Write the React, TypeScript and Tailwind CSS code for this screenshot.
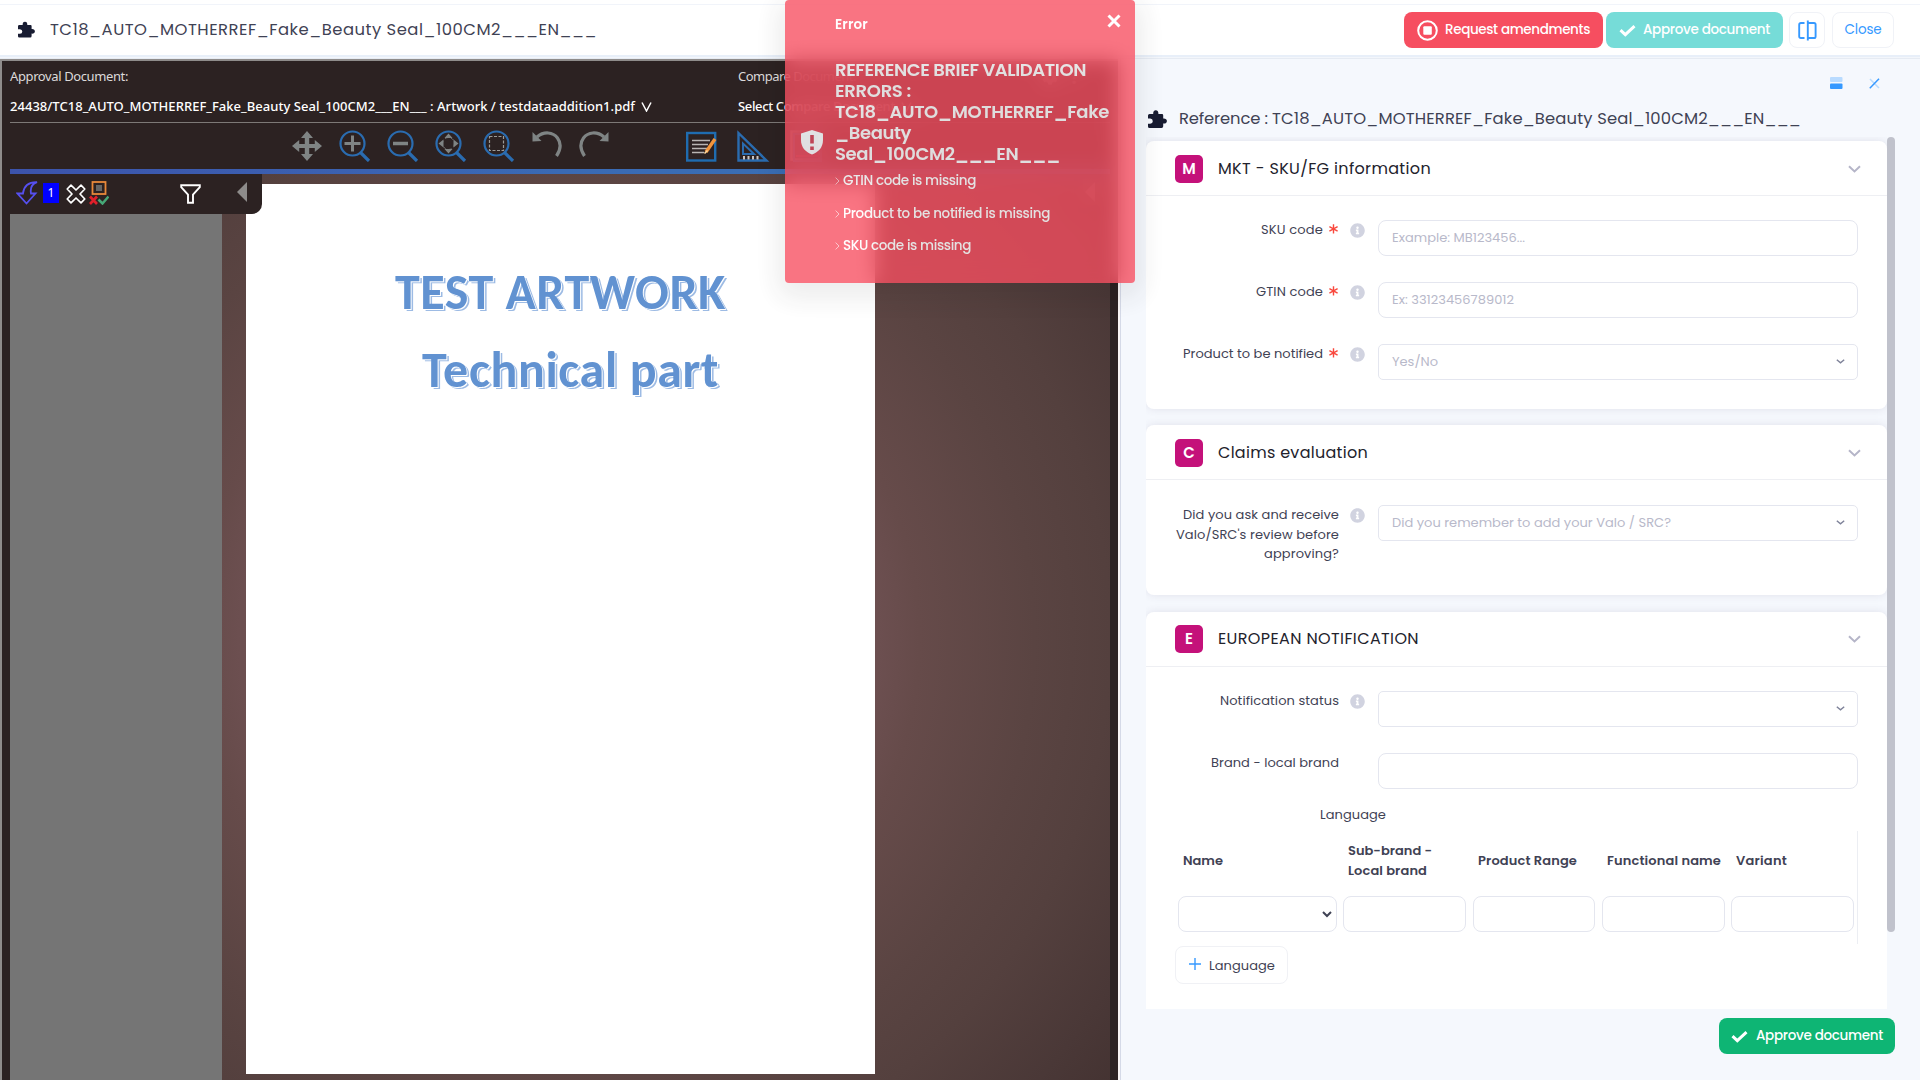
import { useLayoutEffect, useRef, useState } from "react";
import type { ReactNode } from "react";
import { FaInfoCircle, FaCog } from "react-icons/fa";

const REF = "TC18_AUTO_MOTHERREF_Fake_Beauty Seal_100CM2___EN___";

/* Spreads or tightens a single line of text so that it fills the given width. */
function Fit({ w, children, className = "" }: { w: number; children: string; className?: string }) {
  const ref = useRef<HTMLSpanElement>(null);
  const [ls, setLs] = useState(0);
  useLayoutEffect(() => {
    if (ref.current) {
      const natural = ref.current.getBoundingClientRect().width;
      setLs((w - natural) / children.length);
    }
  }, [w, children]);
  return (
    <span ref={ref} className={`inline-block whitespace-pre ${className}`} style={{ letterSpacing: `${ls}px` }}>
      {children}
    </span>
  );
}

function Puzzle({ className = "" }: { className?: string }) {
  return (
    <svg viewBox="0 0 19 18" fill="#181c32" className={className}>
      <path d="M1.500 4H5.200C5 1.500 6 .2 7.800.2S10.600 1.500 10.400 4H14Q15.200 4 15.200 5.200V8.400C17.500 8.200 18.900 9.300 18.900 11S17.500 13.800 15.200 13.600V16.300Q15.200 18 13.600 18H1.500Q0 18 0 16.500V13.800H2.200Q4.800 13.600 4.800 11.200T2.200 8.600H0V5.500Q0 4 1.500 4z" />
    </svg>
  );
}

function Check({ className = "" }: { className?: string }) {
  return (
    <svg width="17" height="12" viewBox="0 0 17 12" fill="none" className={className}>
      <path d="M1.5 5.2 6.3 9.6 15.5 1.2" stroke="#fff" strokeWidth="3" />
    </svg>
  );
}

function Chevron({ className = "" }: { className?: string }) {
  return (
    <svg width="13" height="8" viewBox="0 0 13 8" fill="none" className={className}>
      <path d="M1 1.2 6.5 6.4 12 1.2" stroke="#b5b5c8" strokeWidth="2" />
    </svg>
  );
}

function SmallChevron() {
  return (
    <svg width="9" height="5" viewBox="0 0 9 5" fill="none">
      <path d="M.8.7 4.5 3.8 8.2.7" stroke="#7e8299" strokeWidth="1.4" />
    </svg>
  );
}

function Magnifier({ children }: { children: ReactNode }) {
  return (
    <svg width="32" height="32" viewBox="0 0 32 32" fill="none">
      <circle cx="13.5" cy="13.5" r="12" stroke="#2a6cb0" strokeWidth="2.2" />
      <path d="M21.5 22.5 30 31" stroke="#2a6cb0" strokeWidth="3.2" />
      {children}
    </svg>
  );
}

function Toolbar() {
  return (
    <div className="flex h-[46px] flex-none items-start pt-[7px] pl-[282px]">
      <svg width="30" height="32" viewBox="0 0 30 32" fill="#7f8484" className="mr-[17px]">
        <path d="M15 1l6 7h-3.8v6h5.6v-4L30 16l-7.200 6v-4h-5.600v6H21l-6 7-6-7h3.800v-6H7.200v4L0 16l7.200-6v4h5.600V8H9z" />
      </svg>
      <Magnifier>
        <path d="M13.500 5.500v16M5.500 13.500h16" stroke="#7f8484" strokeWidth="3" />
      </Magnifier>
      <span className="w-4" />
      <Magnifier>
        <path d="M6 13.500h15" stroke="#7f8484" strokeWidth="3.500" />
      </Magnifier>
      <span className="w-4" />
      <Magnifier>
        <path d="M13.500 3.500l4 4.500h-8zM13.500 23.500l4-4.500h-8zM3.500 13.500l5-4v8zM23.500 13.500l-5-4v8z" fill="#7f8484" />
        <circle cx="13.500" cy="13.500" r="6" stroke="#7f8484" strokeWidth=".8" strokeDasharray="3 3" />
      </Magnifier>
      <span className="w-4" />
      <Magnifier>
        <rect x="6.500" y="6.500" width="14" height="14" stroke="#9a9a98" strokeWidth="1.200" strokeDasharray="3 1.500" />
      </Magnifier>
      <svg width="31" height="28" viewBox="0 0 31 28" fill="none" className="ml-[17px]">
        <path d="M5 7C12 1 21 2 25.500 8c4 5.500 3 12-1 18" stroke="#7f8484" strokeWidth="3.200" />
        <path d="M.5 2v9.500L9.500 11z" fill="#7f8484" />
      </svg>
      <svg width="31" height="28" viewBox="0 0 31 28" fill="none" className="ml-[15px]">
        <path d="M26 7C19 1 10 2 5.500 8c-4 5.500-3 12 1 18" stroke="#7f8484" strokeWidth="3.200" />
        <path d="M30.500 2v9.500L21.500 11z" fill="#7f8484" />
      </svg>
      <svg width="31" height="32" viewBox="0 0 31 32" fill="none" className="ml-[77px]">
        <rect x="1.200" y="3" width="28" height="27.500" stroke="#1f6cb0" strokeWidth="2.400" />
        <path d="M6 10.500h18M6 14.500h16M6 18.500h15M6 22.500h12" stroke="#b9b5b3" strokeWidth="1.300" />
        <path d="M29 9 20 22" stroke="#f2953c" strokeWidth="3.400" />
        <path d="M21.500 20.500 18.500 23.500" stroke="#ffd9a0" strokeWidth="1.600" />
      </svg>
      <svg width="33" height="32" viewBox="0 0 33 32" fill="none" className="ml-[20px]">
        <path d="M1.500 3v27.500H29.500z" stroke="#2a6cb0" strokeWidth="2.400" />
        <path d="M6 13.500v10.500h11z" stroke="#2a6cb0" strokeWidth="2" />
        <path d="M7 26v3.500M11.500 26v3.500M16 26v3.500M20.500 26v3.500" stroke="#c9c5c3" strokeWidth="2" />
      </svg>
      <svg width="33" height="33" viewBox="0 0 33 33" fill="none" className="ml-[20px]">
        <rect x="1.500" y="1.500" width="28" height="28" stroke="#8a8a8a" strokeWidth="2.400" />
        <rect x="4" y="4" width="27" height="27" stroke="#2a6cb0" strokeWidth="2" />
        <path d="M6 26h24" stroke="#c02030" strokeWidth="2" />
      </svg>
    </div>
  );
}

function Caret() {
  return (
    <svg width="11" height="10" viewBox="0 0 11 10" fill="none">
      <path d="M1 .5 5.500 9 10 .5" stroke="#fff" strokeWidth="1.500" />
    </svg>
  );
}

function Viewer() {
  return (
    <div className="flex h-[1021px] w-[1118px] flex-none flex-col border-t-2 border-l-2 border-[#8f8c8b] bg-[#2c2222] pr-2 pl-2 font-['Noto_Sans','Open_Sans',sans-serif] text-[13px] text-white">
      <div className="flex h-[62px] flex-none border-b border-[#7d7977]">
        <div className="flex w-[728px] flex-col">
          <div className="flex h-8 items-center text-[#dcdada]">
            <Fit w={118}>Approval Document:</Fit>
          </div>
          <div className="flex h-7 items-center gap-[6px] text-[13px] font-medium">
            <Fit w={625}>{`24438/${REF} : Artwork / testdataaddition1.pdf`}</Fit>
            <Caret />
          </div>
        </div>
        <div className="flex flex-1 flex-col">
          <div className="flex h-8 items-center text-[#dcdada]">
            <Fit w={118}>Compare Document:</Fit>
            <FaCog className="ml-[186px] text-[16px] text-[#9a9a9a]" />
            <span className="ml-3 text-[20px] font-bold text-[#9a9a9a]">?</span>
          </div>
          <div className="flex h-7 items-center gap-[6px] font-medium">
            <Fit w={157}>Select Compare Document</Fit>
            <Caret />
          </div>
        </div>
      </div>
      <Toolbar />
      <div className="h-[5px] flex-none bg-linear-to-r from-[#3c53ab] via-[#3a6ab4] to-[#3a73b4]" />
      <div className="relative flex flex-1 overflow-hidden bg-[radial-gradient(circle_at_549px_466px,#7a5a5a_0px,#6c4f50_320px,#664b4a_360px,#5a4442_475px,#54403e_551px,#4a3837_650px,#433231_720px)]">
        <div className="w-[212px] bg-[#757575]" />
        <div className="mt-[10px] ml-6 flex h-[890px] w-[629px] flex-col bg-white pl-[149px] font-[Carlito,Calibri,Lato,'Liberation_Sans',sans-serif] text-[50px] leading-[56px] font-bold text-[#6192d1] [text-shadow:1px_1px_0_#fff,2.500px_2px_0_#9dbbe4]">
          <span className="mt-[80px]">
            <Fit w={331}>TEST ARTWORK</Fit>
          </span>
          <span className="mt-[22px] pl-[27px]">
            <Fit w={297}>Technical part</Fit>
          </span>
        </div>
        <div className="absolute top-0 left-0 flex h-10 w-[252px] items-center rounded-br-[10px] bg-[#2c2222] pb-[2px] pl-[6px]">
          <svg width="22" height="25" viewBox="0 0 22 25" fill="none">
            <path d="M21 1.200C13 1 8 4 7 12.500H1.500L10.500 22.500 19.500 12.500H15C14 7 16 3 21 1.200z" stroke="#5650f0" strokeWidth="1.800" />
          </svg>
          <span className="ml-[5px] flex h-5 w-4 items-center justify-center bg-[#0000ff] text-[12px]">1</span>
          <svg width="20" height="20" viewBox="0 0 20 20" fill="none" className="mt-px ml-[7px]">
            <path d="M5 1.200 10 6l5-4.800L18.800 5 14 10l4.800 5-3.800 3.800L10 14l-5 4.800L1.200 15 6 10 1.200 5z" stroke="#fff" strokeWidth="1.700" strokeLinejoin="round" />
          </svg>
          <svg width="20" height="24" viewBox="0 0 20 24" fill="none" className="ml-[3px]">
            <rect x="3.500" y="1" width="13" height="12" stroke="#e8883a" strokeWidth="1.800" />
            <rect x="7" y="4" width="6" height="6" fill="#666" />
            <path d="M1 15.500l7 7.500M8 15.500l-7 7.500" stroke="#e0202a" strokeWidth="2.600" />
            <path d="M9.500 18.500l4 4 6-7" stroke="#46a877" strokeWidth="2.500" />
          </svg>
          <svg width="21" height="20" viewBox="0 0 21 20" fill="none" className="mt-[2px] ml-[71px]">
            <path d="M1.200 1.200h18.600v2L13 10.500v8.300H8v-8.300L1.200 3.200z" stroke="#fff" strokeWidth="1.900" />
          </svg>
          <svg width="10" height="20" viewBox="0 0 10 20" fill="#8d8b8a" className="mb-[2px] ml-[36px]">
            <path d="M10 0v20L0 10z" />
          </svg>
        </div>
        <div className="absolute top-0 right-0 flex h-10 w-9 items-center rounded-bl-[10px] bg-[#2c2222]/30 pl-[11px]">
          <svg width="10" height="20" viewBox="0 0 10 20" fill="#a09a98" className="mb-1">
            <path d="M10 0v20L0 10z" />
          </svg>
        </div>
      </div>
    </div>
  );
}

function Card({ letter, title, w, className, children }: { letter: string; title: string; w: number; className: string; children: ReactNode }) {
  return (
    <section className={`flex flex-none flex-col bg-white shadow-[0_0_8px_rgba(82,63,105,0.12)] ${className}`}>
      <header className="flex h-[55px] flex-none items-center border-b border-[#eeeff3] pt-[2px] pr-[26px] pl-[29px]">
        <span className="flex size-7 items-center justify-center rounded-[5px] bg-[#c4117a] text-[15px] font-semibold text-white">{letter}</span>
        <span className="ml-[15px] flex-1 text-[16px] text-[#22222c]">
          <Fit w={w}>{title}</Fit>
        </span>
        <Chevron />
      </header>
      {children}
    </section>
  );
}

function Row({ label, w, required, info, placeholder = "", pw = 0, select, children, className = "" }: {
  label?: string; w?: number; required?: boolean; info?: boolean; placeholder?: string; pw?: number; select?: boolean; children?: ReactNode; className?: string;
}) {
  return (
    <div className={`flex ${className}`}>
      <div className="flex w-[193px] flex-none items-start justify-end text-right leading-[19.500px]">
        {children ?? <Fit w={w ?? 0}>{label ?? ""}</Fit>}
        {required && (
          <svg width="9" height="10" viewBox="0 0 9 10" className="mt-[4px] mr-px ml-[6px]" stroke="#f9483d" strokeWidth="1.400">
            <path d="M4.500.3v9.200M.4 2.700l8.200 4.500M8.600 2.700.4 7.200" />
          </svg>
        )}
      </div>
      <div className="flex w-[39px] flex-none pt-[3px] pl-[11px]">{info && <FaInfoCircle className="text-[15px] text-[#d1d3e0]" />}</div>
      <div className={`flex h-9 w-[480px] items-center justify-between border border-[#e4e6ef] pr-[12px] pb-px pl-[13px] text-[#b8b9ca] ${select ? "rounded-[5px]" : "rounded-[8px]"}`}>
        {placeholder ? <Fit w={pw}>{placeholder}</Fit> : <span />}
        {select && <SmallChevron />}
      </div>
    </div>
  );
}

function Th({ w, children }: { w: number; children: string }) {
  return (
    <div>
      <Fit w={w}>{children}</Fit>
    </div>
  );
}

function Panel() {
  return (
    <div className="flex flex-1 flex-col pl-7">
      <div className="flex h-[44px] flex-none items-center justify-end gap-[26px] pt-[4px] pr-[40px]">
        <svg width="13" height="12" viewBox="0 0 13 12">
          <rect width="12.500" height="5" rx="1" fill="#b9dbff" />
          <rect y="6.500" width="12.500" height="5.500" rx="1" fill="#3699ff" />
        </svg>
        <svg width="11" height="11" viewBox="0 0 11 11" fill="none" strokeWidth="1.500">
          <path d="M1 1l9 9" stroke="#b9dbff" />
          <path d="M10 .8.8 10.200" stroke="#3699ff" />
        </svg>
      </div>
      <div className="flex h-[34px] flex-none items-center pb-[2px] pl-[2px] text-[16.400px] text-[#3f4254]">
        <Puzzle className="mr-[12px] h-[18px] w-[19px]" />
        <span className="pt-px">
          <Fit w={93}>{"Reference : "}</Fit>
          <Fit w={529}>{REF}</Fit>
        </span>
      </div>
      <div className="flex h-[872px] flex-none overflow-hidden">
        <div className="flex h-[872px] w-[741px] flex-col gap-4 overflow-hidden pt-[4px]">
          <Card letter="M" title="MKT - SKU/FG information" w={213} className="h-[268px] rounded-[8px]">
            <Row className="mt-[24px]" label="SKU code" w={62} required info placeholder="Example: MB123456..." pw={133} />
            <Row className="mt-[26px]" label="GTIN code" w={67} required info placeholder="Ex: 33123456789012" pw={122} />
            <Row className="mt-[26px]" label="Product to be notified" w={140} required info placeholder="Yes/No" pw={46} select />
          </Card>
          <Card letter="C" title="Claims evaluation" w={150} className="h-[170px] rounded-[8px]">
            <Row className="mt-[25px]" info placeholder="Did you remember to add your Valo / SRC?" pw={279} select>
              <span className="flex flex-col items-end">
                <Fit w={156}>Did you ask and receive</Fit>
                <Fit w={163}>Valo/SRC's review before</Fit>
                <Fit w={75}>approving?</Fit>
              </span>
            </Row>
          </Card>
          <Card letter="E" title="EUROPEAN NOTIFICATION" w={201} className="mt-px h-[420px] rounded-t-[8px] *:first:pt-0">
            <Row className="mt-[24px]" label="Notification status" w={119} info select />
            <Row className="mt-[26px]" label="Brand - local brand" w={128} />
            <div className="mt-[15px] h-[27px] pl-[174px] leading-[22px]">
              <Fit w={66}>Language</Fit>
            </div>
            <div className="ml-[29px] h-[113px] w-[683px] flex-none border-r border-[#eceef3]">
              <div className="grid h-[58px] grid-cols-[165px_130px_129px_129px_129px] items-center pt-[2px] pl-2 leading-[20px] font-semibold">
                <Th w={40}>Name</Th>
                <div className="flex flex-col items-start">
                  <Th w={84}>Sub-brand -</Th>
                  <Th w={79}>Local brand</Th>
                </div>
                <Th w={99}>Product Range</Th>
                <Th w={114}>Functional name</Th>
                <Th w={51}>Variant</Th>
              </div>
              <div className="mt-[7px] flex pl-[3px]">
                <div className="flex h-9 w-[159px] items-center justify-end rounded-[8px] border border-[#e4e6ef] pr-[4px]">
                  <svg width="10" height="7" viewBox="0 0 10 7" fill="none">
                    <path d="M1 1l4 4 4-4" stroke="#3f4254" strokeWidth="2" />
                  </svg>
                </div>
                <div className="ml-[6px] h-9 w-[123px] rounded-[8px] border border-[#e4e6ef]" />
                <div className="ml-[7px] h-9 w-[122px] rounded-[8px] border border-[#e4e6ef]" />
                <div className="ml-[7px] h-9 w-[123px] rounded-[8px] border border-[#e4e6ef]" />
                <div className="ml-[6px] h-9 w-[123px] rounded-[8px] border border-[#e4e6ef]" />
              </div>
            </div>
            <button className="mt-[2px] ml-[29px] flex h-[38px] w-[113px] flex-none items-center rounded-[8px] border border-[#f0f1f5] pt-px pl-[13px]">
              <svg width="12" height="12" viewBox="0 0 12 12" className="mr-[8px] mb-[3px]">
                <path d="M6 0v12M0 6h12" stroke="#3699ff" strokeWidth="1.400" />
              </svg>
              <Fit w={66}>Language</Fit>
            </button>
          </Card>
        </div>
        <div className="h-[795px] w-2 rounded bg-[#c0c2cc]" />
      </div>
      <button className="mt-[9px] ml-[573px] flex h-9 w-[176px] flex-none items-center rounded-[8px] bg-[#0eb574] pt-px pl-[12px] text-[13.500px] font-medium text-white">
        <Check className="mr-[8px]" />
        <Fit w={127}>Approve document</Fit>
      </button>
    </div>
  );
}

function Header() {
  return (
    <header className="flex h-[59px] flex-none items-center border-b border-[#e6ebf3] bg-[linear-gradient(#fff_0_4px,#f1f4fa_4px_5px,#fff_5px_55px,#e8eff9_55px_57px,#f3f6fb_57px)] pt-[2px] pr-[26px] pl-[18px]">
      <Puzzle className="mr-[15px] mb-px h-[17px] w-[17px]" />
      <span className="flex-1 text-[16.400px] text-[#3f4254]">
        <Fit w={547}>{REF}</Fit>
      </span>
      <div className="flex h-9 w-[199px] items-center rounded-[8px] bg-[#f64e60] pt-px pl-[13px] text-[13.500px] font-medium text-white">
        <svg width="21" height="21" viewBox="0 0 21 21" fill="none" className="mr-[7px]">
          <circle cx="10.500" cy="10.500" r="9.300" stroke="#fff" strokeWidth="2" />
          <rect x="6.300" y="6.300" width="8.500" height="8.500" rx="1" fill="#fff" />
        </svg>
        <Fit w={145}>Request amendments</Fit>
      </div>
      <div className="ml-[3px] flex h-9 w-[177px] items-center rounded-[8px] bg-[#76dcd8] pt-px pl-[13px] text-[13.500px] font-medium text-white">
        <Check className="mr-[7px]" />
        <Fit w={127}>Approve document</Fit>
      </div>
      <div className="ml-[6px] flex h-9 w-[36px] items-center justify-center rounded-[8px] border border-[#f0f2f7]">
        <svg width="19" height="21" viewBox="0 0 19 21" fill="none" stroke="#3699ff" strokeWidth="1.900">
          <path d="M6.500 3H3Q1.200 3 1.200 4.800V16.200Q1.200 18 3 18h3.500M9.800.5v20M9.800 3H16q1.600 0 1.600 1.600v11.800Q17.600 18 16 18H9.800" />
        </svg>
      </div>
      <div className="ml-[7px] flex h-9 w-[62px] items-center justify-center rounded-[8px] border border-[#f0f2f7] pt-px text-[13.500px] text-[#3699ff]">
        <Fit w={37}>Close</Fit>
      </div>
    </header>
  );
}

function ToastItem({ w, children }: { w: number; children: string }) {
  return (
    <li className="flex h-[32.500px] items-start leading-[20px]">
      <svg width="5" height="8" viewBox="0 0 5 8" fill="none" className="mt-[6px] mr-[3px]">
        <path d="M.6.6 4 4 .6 7.400" stroke="#fff" strokeOpacity=".6" />
      </svg>
      <Fit w={w}>{children}</Fit>
    </li>
  );
}

function Toast() {
  return (
    <div className="absolute top-0 left-[785px] flex h-[283px] w-[350px] rounded-[4px] bg-[#f64e60]/93 pt-[15px] text-white opacity-85 shadow-[0_8px_28px_8px_rgba(0,0,0,0.09)] backdrop-blur-[10px]">
      <svg width="22" height="25" viewBox="0 0 22 25" className="mt-[115px] ml-4 flex-none">
        <path d="M11 0 22 3.500V10c0 7.500-4.500 12-11 14.500C4.500 22 0 17.500 0 10V3.500z" fill="#fff" />
        <path d="M11 5v8.500M11 16.500v3.500" stroke="#d84a5b" strokeWidth="3.600" />
      </svg>
      <div className="ml-[12px] flex-none">
        <div className="h-5 text-[13.500px] leading-5 font-semibold">
          <Fit w={33}>Error</Fit>
        </div>
        <div className="mt-[24px] flex flex-col items-start text-[18px] leading-[21px] font-semibold">
          <Fit w={251}>REFERENCE BRIEF VALIDATION</Fit>
          <Fit w={76}>ERRORS :</Fit>
          <Fit w={274}>TC18_AUTO_MOTHERREF_Fake</Fit>
          <Fit w={76}>_Beauty</Fit>
          <Fit w={225}>Seal_100CM2___EN___</Fit>
        </div>
        <ul className="mt-[7px] text-[13.500px] font-medium">
          <ToastItem w={133}>GTIN code is missing</ToastItem>
          <ToastItem w={207}>Product to be notified is missing</ToastItem>
          <ToastItem w={128}>SKU code is missing</ToastItem>
        </ul>
      </div>
      <svg width="14" height="14" viewBox="0 0 14 14" className="absolute top-[14px] right-[14px]">
        <path d="M1.500 1.500l11 11M12.500 1.500l-11 11" stroke="#fff" strokeWidth="3" />
      </svg>
    </div>
  );
}

export default function App() {
  return (
    <div className="relative flex h-[1080px] w-[1920px] flex-col overflow-hidden bg-[#f5f8fd] font-[Poppins,Inter,sans-serif] text-[13px] text-[#3f4254]">
      <Header />
      <div className="flex flex-1">
        <Viewer />
        <div className="w-[3px] flex-none border-r border-[#d5dae8] bg-[#f8f4f4]" />
        <div className="-ml-[3px] flex flex-1">
          <Panel />
        </div>
      </div>
      <Toast />
    </div>
  );
}
